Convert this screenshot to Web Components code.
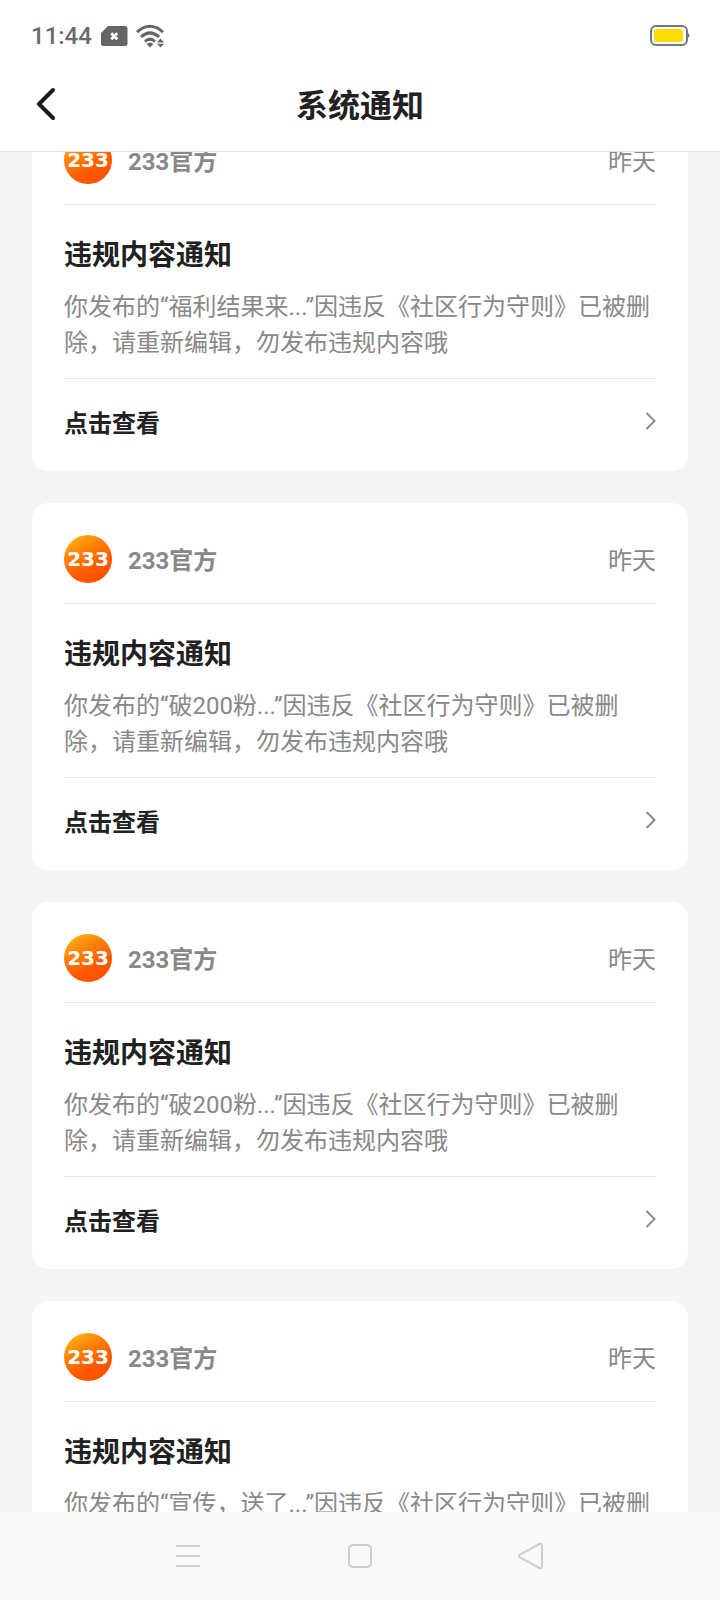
<!DOCTYPE html>
<html lang="zh-CN">
<head>
<meta charset="utf-8">
<meta name="viewport" content="width=device-width, initial-scale=1">
<title>系统通知</title>
<style>
  body {
    margin: 0;
    height: 100vh;
    display: flex;
    flex-direction: column;
    background: #f4f4f4;
    color: #212121;
    font-family: Roboto, "Noto Sans CJK SC", sans-serif;
    font-size: 24px;
    line-height: 36px;
  }
</style>
</head>
<body>
<status-bar time="11:44"></status-bar>
<title-bar>系统通知</title-bar>
<notice-feed>
  <notice-card><span slot="sender">233官方</span><span slot="time">昨天</span><span slot="title">违规内容通知</span>你发布的“福利结果来...”因违反《社区行为守则》已被删除，请重新编辑，勿发布违规内容哦</notice-card>
  <notice-card><span slot="sender">233官方</span><span slot="time">昨天</span><span slot="title">违规内容通知</span>你发布的“破200粉...”因违反《社区行为守则》已被删除，请重新编辑，勿发布违规内容哦</notice-card>
  <notice-card><span slot="sender">233官方</span><span slot="time">昨天</span><span slot="title">违规内容通知</span>你发布的“破200粉...”因违反《社区行为守则》已被删除，请重新编辑，勿发布违规内容哦</notice-card>
  <notice-card><span slot="sender">233官方</span><span slot="time">昨天</span><span slot="title">违规内容通知</span>你发布的“宣传，送了...”因违反《社区行为守则》已被删除，请重新编辑，勿发布违规内容哦</notice-card>
</notice-feed>
<system-nav></system-nav>

<script>
class BaseElement extends HTMLElement {
  constructor() {
    super();
    this.attachShadow({ mode: 'open' }).innerHTML = this.constructor.markup;
  }
}

class StatusBar extends BaseElement {
  static markup = `
    <style>
      :host { display: flex; align-items: center; gap: 8px; height: 40px; padding: 16px 29px 0 31px; background: #fff; color: #6a6a6a; }
      time { font-weight: 500; }
      svg { display: block; }
      .battery { margin-left: auto; }
    </style>
    <time></time>
    <svg width="28" height="22" viewBox="0 0 28 22" aria-hidden="true">
      <path d="M8 1H25Q27.500 1 27.500 3.500V18.500Q27.500 21 25 21H3.500Q1 21 1 18.500V8Z" fill="#666"/>
      <path d="M11.200 8.200l6 6m0-6l-6 6" stroke="#fff" stroke-width="2.800"/>
    </svg>
    <svg width="30" height="24" viewBox="0 0 30 24" aria-hidden="true">
      <g fill="none" stroke="#666" stroke-width="3">
        <path d="M1 8.200Q14-3.600 27 8.200"/>
        <path d="M5 13Q14 4.800 23 13"/>
        <path d="M9 17.500Q14 12.800 19 17.500"/>
      </g>
      <path d="M10.500 20Q14 17 17.500 20L14 23.500Z" fill="#666"/>
      <path d="M21 18.500l3.500-4 3.500 4zM21 19.800h7l-3.500 3.700z" fill="#666"/>
    </svg>
    <svg class="battery" width="42" height="24" viewBox="0 0 42 24" role="img" aria-label="电池">
      <rect x="2" y="2" width="36" height="19" rx="5" fill="#fff" stroke="#74777c" stroke-width="2"/>
      <rect x="5" y="5" width="29" height="13" rx="3" fill="#fd0"/>
      <path d="M39 9q3 2.500 0 5z" fill="#74777c"/>
    </svg>`;
  connectedCallback() {
    this.shadowRoot.querySelector('time').textContent = this.getAttribute('time');
  }
}

class TitleBar extends BaseElement {
  static markup = `
    <style>
      :host { display: grid; grid-template-columns: 96px 1fr 96px; align-items: center; height: 95px; background: #fff; border-bottom: 1px solid #e0e0e0; }
      button { width: 96px; height: 95px; padding: 0; border: 0; background: none; }
      svg { display: block; margin-left: 34px; }
      h1 { margin: 0; padding-top: 4px; font-size: 32px; line-height: 48px; font-weight: 700; text-align: center; }
    </style>
    <button type="button" aria-label="返回">
      <svg width="24" height="34" viewBox="0 0 24 34" fill="none" stroke="#1c1c1c" stroke-width="4" stroke-linecap="round" stroke-linejoin="round"><path d="M19 3L5 17l14 14"/></svg>
    </button>
    <h1><slot></slot></h1>`;
}

class NoticeFeed extends BaseElement {
  static markup = `
    <style>
      :host { display: flex; flex-direction: column; gap: 32px; flex: 1; min-height: 0; box-sizing: border-box; padding: 16px 32px 32px; overflow-y: auto; scrollbar-width: none; }
    </style>
    <slot></slot>`;
}

class BrandAvatar extends BaseElement {
  static markup = `
    <style>
      :host { display: grid; place-items: center; width: 48px; height: 48px; border-radius: 50%; overflow: hidden; color: #fff; background: linear-gradient(150deg, #ffb412 8%, #ff8206 35%, #ff5a00 65%, #ff4a00 100%); font: 700 20px/24px "DejaVu Sans", sans-serif; }
    </style>
    <span>233</span>`;
}

class NoticeCard extends BaseElement {
  static markup = `
    <style>
      :host { display: block; flex: none; padding: 0 32px; border-radius: 16px; background: #fff; }
      header { display: flex; align-items: flex-end; gap: 16px; padding: 32px 0 20px; border-bottom: 1px solid #e8e8e8; color: #888; line-height: 44px; }
      .sender { flex: 1; font-weight: 700; }
      .content { padding: 31px 0 17px; border-bottom: 1px solid #e8e8e8; }
      h2 { margin: 0 0 13px; font-size: 28px; line-height: 40px; font-weight: 700; }
      p { margin: 0; color: #888; }
      a { display: flex; align-items: center; justify-content: space-between; height: 84px; padding-bottom: 8px; color: inherit; font-weight: 700; text-decoration: none; }
      .label { padding-top: 6px; }
    </style>
    <header>
      <brand-avatar></brand-avatar>
      <span class="sender"><slot name="sender"></slot></span>
      <slot name="time"></slot>
    </header>
    <div class="content">
      <h2><slot name="title"></slot></h2>
      <p><slot></slot></p>
    </div>
    <a href="#detail"><span class="label">点击查看</span>
      <svg width="12" height="20" viewBox="0 0 12 20" fill="none" stroke="#8b8b8b" stroke-width="2" aria-hidden="true"><path d="M2.500 2l8 8-8 8"/></svg>
    </a>`;
}

class SystemNav extends BaseElement {
  static markup = `
    <style>
      :host { display: flex; height: 88px; padding: 0 102px; background: #f9f9f9; }
      button { flex: 1; display: grid; place-items: center; padding: 0; border: 0; background: none; }
      svg { fill: none; stroke: #ccc; stroke-width: 2; }
    </style>
    <button type="button" aria-label="最近任务"><svg width="28" height="28" viewBox="0 0 28 28"><path d="M2 4h24M2 14h24M2 24h24"/></svg></button>
    <button type="button" aria-label="主屏幕"><svg width="28" height="28" viewBox="0 0 28 28"><rect x="3" y="3" width="22" height="22" rx="4"/></svg></button>
    <button type="button" aria-label="返回"><svg width="28" height="28" viewBox="0 0 28 28"><path d="M21.500 2L2 12.600q-2 1.400 0 2.800L21.500 26q2.500 1 2.500-1.500V3.500Q24 1 21.500 2z" stroke-linejoin="round"/></svg></button>`;
}

customElements.define('status-bar', StatusBar);
customElements.define('title-bar', TitleBar);
customElements.define('brand-avatar', BrandAvatar);
customElements.define('notice-card', NoticeCard);
customElements.define('notice-feed', NoticeFeed);
customElements.define('system-nav', SystemNav);

document.querySelector('notice-feed').scrollTop = 64;
</script>
</body>
</html>
